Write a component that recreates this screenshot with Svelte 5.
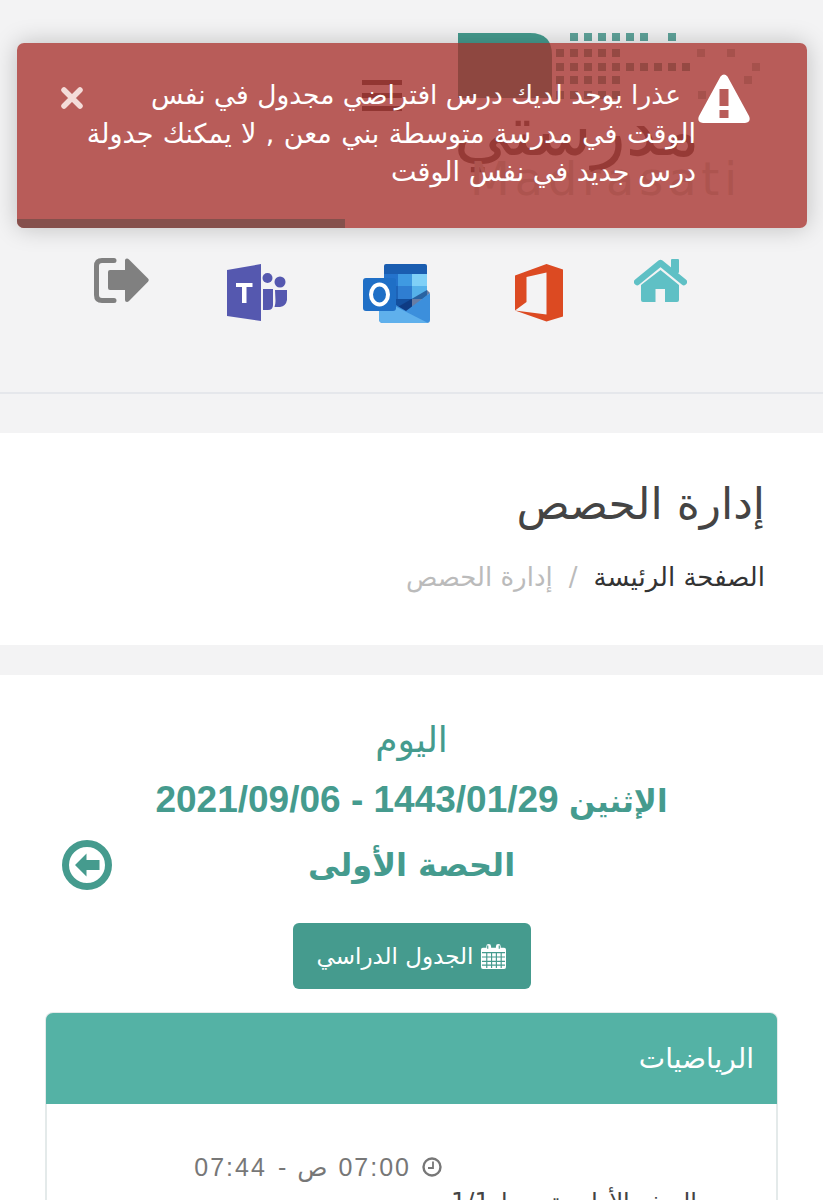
<script lang="ts">
  // brand dots next to the logo mark: [x, y] on a 14px-ish grid
  const dots: number[][] = [];
  const rows: [number, number[]][] = [
    [33, [570, 584, 598, 612, 626, 640, 668]],
    [49, [556, 570, 584, 598, 612, 697, 727]],
    [63, [556, 570, 584, 598, 612, 626, 640, 654, 668, 682, 752]],
    [76, [556, 570, 584, 598, 612, 744]],
    [91, [556, 570, 584, 598, 612, 698]]
  ];
  for (const [y, xs] of rows) for (const x of xs) dots.push([x - 458, y - 30]);
</script>

<div class="page" dir="rtl">
  <header class="topbar">
    <div class="brand-row">
      <svg class="logo" viewBox="0 0 330 175" width="330" height="175" aria-label="Madrasati">
        <path class="mark" d="M0 3H72Q94 3 94 25V68H0Z" />
        {#each dots as d}
          <rect class="dot" class:far={d[0] > 230} x={d[0]} y={d[1]} width="8" height="8" />
        {/each}
        <text class="logo-ar" x="242" y="125" text-anchor="end">مدرستي</text>
        <text class="logo-en" x="12" y="165">Madrasati</text>
      </svg>
      <div class="burger"><span></span><span></span><span></span></div>
    </div>

    <nav class="shortcuts">
      <a class="home" href="#home" aria-label="home">
        <svg viewBox="0 0 53 45" width="53" height="45">
          <rect x="37" y="1" width="8" height="14" rx="1" />
          <path class="roof" d="M3.200 24L26.500 5L49.800 24" />
          <path d="M26.500 12L45 27V42Q45 44 43 44H31V31H21.500V44H9Q7 44 7 42V27Z" />
        </svg>
      </a>
      <a class="office" href="#office" aria-label="office">
        <svg viewBox="0 0 48 58" width="48" height="58">
          <path d="M0 11.500L31.500 0L48 5.500V52.500L31.500 57.500L0 46.500L31.500 50.500V8.500L11.500 13V38L0 46.500Z" />
        </svg>
      </a>
      <a class="outlook" href="#outlook" aria-label="outlook">
        <svg viewBox="0 0 68 60" width="68" height="60">
          <path fill="#1a5db0" d="M21 2Q21 0 23 0H62Q64 0 64 2V10H21Z" />
          <rect fill="#2473cc" x="21" y="10" width="14" height="12" />
          <rect fill="#3f9ae2" x="35" y="10" width="14" height="12" />
          <rect fill="#7fd0f7" x="49" y="10" width="15" height="12" />
          <rect fill="#1d63b8" x="21" y="22" width="14" height="13" />
          <rect fill="#2f7ed2" x="35" y="22" width="14" height="13" />
          <rect fill="#56b2ea" x="49" y="22" width="15" height="13" />
          <rect fill="#134f9e" x="21" y="35" width="28" height="12" />
          <path fill="#0c2f72" d="M33 44L64 26L67 29L44 48Z" opacity=".6" />
          <path fill="#3c8fdc" d="M16 31L43 47L67 29V56Q67 59 64 59H20Q16 59 16 55Z" />
          <path fill="#5fb0ec" d="M16 34L65 59H20Q16 59 16 55Z" />
          <rect fill="#1f6fc6" x="0" y="14" width="33" height="33" rx="3" />
          <ellipse cx="16.500" cy="30.500" rx="8.500" ry="10" fill="none" stroke="#fff" stroke-width="4" />
        </svg>
      </a>
      <a class="teams" href="#teams" aria-label="teams">
        <svg viewBox="0 0 61 58" width="61" height="58">
          <path fill="#5558af" d="M0 6L34 0V57L0 52Z" />
          <path fill="#fff" d="M9 19H25.500V23H19.500V39H15V23H9Z" />
          <circle fill="#5558af" cx="40.500" cy="14" r="5" />
          <circle fill="#5558af" cx="53" cy="18" r="5.500" />
          <path fill="#5558af" d="M36 25H46V41Q46 46 41 46H36Z" />
          <path fill="#5558af" d="M48 26H60V36Q59 42 53 43H47.500Q48.500 40 48.500 37Z" />
        </svg>
      </a>
      <a class="logout" href="#logout" aria-label="logout">
        <svg viewBox="0 0 55 45" width="55" height="45">
          <path fill="none" stroke="#808080" stroke-width="5" stroke-linecap="round" d="M20 2.500H8Q2.500 2.500 2.500 8V37Q2.500 42.500 8 42.500H20" />
          <path fill="#808080" d="M14 14Q14 12 16 12H31V2.500Q31 .5 33 .6Q34 .6 35 1.600L54 20.500Q55.500 22 54 23.700L35 43Q34 44 33 44Q31 44 31 42V32H16Q14 32 14 30Z" />
        </svg>
      </a>
    </nav>
  </header>

  <section class="heading">
    <h1>إدارة الحصص</h1>
    <div class="crumbs">
      <a href="#root">الصفحة الرئيسة</a>
      <span class="sep">/</span>
      <span class="current">إدارة الحصص</span>
    </div>
  </section>

  <main class="content">
    <div class="today">اليوم</div>
    <div class="date"><span class="day">الإثنين</span> 1443/01/29 - 2021/09/06</div>
    <div class="period-row">
      <a class="back" href="#back" aria-label="back">
        <svg viewBox="0 0 50 50" width="50" height="50">
          <circle cx="25" cy="25" r="21.500" fill="none" stroke="#459b8e" stroke-width="7" />
          <path fill="#459b8e" d="M13 25L24.500 13.500V20H37.500V30H24.500V36.500Z" />
        </svg>
      </a>
      <span class="period">الحصة الأولى</span>
    </div>
    <div class="actions">
      <button class="schedule" type="button">
        <svg viewBox="0 0 26 26" width="25" height="25">
          <path fill="#fff" d="M2 4H5.500V2.500A2.500 2.500 0 0 1 10.500 2.500V4H15.500V2.500A2.500 2.500 0 0 1 20.500 2.500V4H24Q26 4 26 6V24Q26 26 24 26H2Q0 26 0 24V6Q0 4 2 4Z" />
          <path stroke="#459b8e" stroke-width="1.200" d="M1 9H25M1 13.500H25M1 18H25M1 22H25M6 9V25M11 9V25M16 9V25M21 9V25M7 1.500V5M19 1.500V5" />
        </svg>
        الجدول الدراسي
      </button>
    </div>

    <article class="card">
      <div class="card-head">الرياضيات</div>
      <div class="card-body">
        <div class="time">
          <svg viewBox="0 0 20 20" width="20" height="20">
            <circle cx="10" cy="10" r="8.500" fill="none" stroke="#777" stroke-width="2.400" />
            <path fill="none" stroke="#777" stroke-width="1.800" d="M11 4.500V11H6" />
          </svg>
          <span class="clock">07:00</span>
          <span>ص</span>
          <span>-</span>
          <span class="clock">07:44</span>
        </div>
        <div class="klass">الصف الأول متوسط 1/1</div>
      </div>
    </article>
  </main>

  <div class="toast" role="alert">
    <svg class="warn" viewBox="0 0 52 50" width="52" height="50">
      <path fill="#fff" fill-rule="evenodd" d="M22.500 2.500Q26 -1.500 29.500 2.500L51 42Q53.500 48 47 49H5Q-1.500 48 1 42ZM21.500 15V32H30.500V15ZM21.500 36V44H30.500V36Z" />
    </svg>
    <p class="message">
      <button class="close" type="button" aria-label="close">
        <svg viewBox="0 0 24 24" width="24" height="24">
          <path fill="none" stroke="#f4dcd9" stroke-width="5.500" stroke-linecap="round" d="M4 4L20 20M20 4L4 20" />
        </svg>
      </button>
      <span class="first">عذرا يوجد لديك درس افتراضي مجدول في نفس</span><br />
      <span class="second">الوقت في مدرسة متوسطة بني معن , لا يمكنك جدولة</span><br />
      درس جديد في نفس الوقت
    </p>
    <div class="progress"></div>
  </div>
</div>

<style>
  :global(body) {
    margin: 0;
    background: #fff;
  }
  .page {
    position: relative;
    height: 1200px;
    overflow: hidden;
    background: #f3f3f4;
    font-family: "DejaVu Sans", sans-serif;
    color: #444;
  }
  .topbar {
    height: 394px;
    box-sizing: border-box;
    border-bottom: 2px solid #e5e7eb;
  }
  .brand-row {
    display: flex;
    flex-direction: row-reverse;
    align-items: flex-start;
    gap: 56px;
    height: 225px;
    box-sizing: border-box;
    padding: 30px 35px 0 0;
    direction: ltr;
  }
  .logo {
    display: block;
    flex-shrink: 0;
  }
  .mark {
    fill: #459b8e;
  }
  .dot {
    fill: #5fa49b;
  }
  .dot.far {
    fill: #a9c4bf;
  }
  .logo-ar {
    font-size: 70px;
    fill: #666;
  }
  .logo-en {
    font-size: 46px;
    letter-spacing: 5px;
    fill: #c4cfcd;
  }
  .burger {
    display: flex;
    flex-direction: column;
    gap: 8px;
    margin-top: 50px;
    width: 40px;
  }
  .burger span {
    height: 5px;
    background: #555;
  }
  .shortcuts {
    display: flex;
    align-items: flex-start;
    padding-top: 33px;
    padding-right: 136px;
  }
  .shortcuts a {
    display: block;
    line-height: 0;
  }
  .office,
  .outlook,
  .teams {
    margin-top: 6px;
  }
  .office {
    margin-right: 71px;
    fill: #dc4a22;
  }
  .home {
    fill: #5fc0c5;
  }
  .roof {
    fill: none;
    stroke: #5fc0c5;
    stroke-width: 6.500px;
    stroke-linecap: round;
    stroke-linejoin: round;
  }
  .outlook {
    margin-right: 84px;
  }
  .teams {
    margin-right: 75px;
  }
  .logout {
    margin-right: 78px;
  }
  .heading {
    margin-top: 39px;
    height: 212px;
    background: #fff;
    padding: 46px 58px 0;
    box-sizing: border-box;
  }
  h1 {
    margin: 0;
    font-size: 44px;
    font-weight: 400;
    line-height: 50px;
    color: #444;
  }
  .crumbs {
    display: flex;
    gap: 16px;
    margin-top: 28px;
    font-size: 26px;
    line-height: 40px;
  }
  .crumbs a {
    color: #333;
    text-decoration: none;
  }
  .sep,
  .current {
    color: #bbb;
  }
  .content {
    margin-top: 30px;
    height: 525px;
    background: #fff;
    padding-top: 40px;
    box-sizing: border-box;
    text-align: center;
    color: #459b8e;
  }
  .today {
    font-size: 36px;
    line-height: 50px;
  }
  .date {
    margin-top: 8px;
    font-family: "Liberation Sans", "DejaVu Sans", sans-serif;
    font-size: 37px;
    font-weight: 700;
    line-height: 54px;
  }
  .day {
    font-size: 31px;
  }
  .period-row {
    position: relative;
    margin-top: 8px;
    height: 56px;
  }
  .period {
    font-size: 32px;
    font-weight: 700;
    line-height: 56px;
  }
  .back {
    position: absolute;
    left: 62px;
    top: 3px;
    line-height: 0;
  }
  .actions {
    display: flex;
    justify-content: center;
    margin-top: 30px;
  }
  .schedule {
    display: flex;
    align-items: center;
    gap: 8px;
    width: 238px;
    height: 66px;
    justify-content: center;
    padding: 0;
    border: 0;
    border-radius: 6px;
    background: #459b8e;
    color: #fff;
    font-family: inherit;
    font-size: 23px;
  }
  .card {
    margin: 23px 45px 0;
    border: 2px solid #e4eaea;
    border-radius: 8px;
    border-bottom: 0;
    text-align: right;
    color: #777;
    background: #fff;
  }
  .card-head {
    height: 91px;
    box-sizing: border-box;
    margin: -1px -1px 0;
    padding: 0 23px;
    border-radius: 7px 7px 0 0;
    background: #54b2a5;
    color: #fff;
    font-size: 28px;
    line-height: 92px;
  }
  .card-body {
    padding: 48px 0 0;
  }
  .time {
    display: flex;
    align-items: center;
    gap: 11px;
    padding-right: 334px;
    font-family: "Liberation Sans", "DejaVu Sans", sans-serif;
    font-size: 25px;
    line-height: 30px;
  }
  .clock {
    direction: ltr;
    letter-spacing: 2px;
  }
  .klass {
    margin-top: 6px;
    padding-right: 79px;
    font-size: 24px;
    color: #444;
  }
  .toast {
    position: absolute;
    top: 43px;
    left: 17px;
    width: 790px;
    height: 185px;
    overflow: hidden;
    border-radius: 7px;
    background: rgba(166, 45, 40, 0.76);
    box-shadow: 0 0 24px rgba(0, 0, 0, 0.22);
    color: #fff;
  }
  .warn {
    position: absolute;
    top: 31px;
    right: 57px;
  }
  .message {
    position: absolute;
    top: 33px;
    right: 111px;
    left: 43px;
    margin: 0;
    font-size: 27px;
    line-height: 38.500px;
  }
  .first {
    margin-right: -15px;
    padding-right: 30px;
    font-size: 26.500px;
  }
  .second {
    word-spacing: 0.800px;
  }
  .close {
    float: left;
    margin: 10px 0 0;
    padding: 0;
    border: 0;
    background: none;
    line-height: 0;
  }
  .progress {
    position: absolute;
    bottom: 0;
    left: 0;
    width: 328px;
    height: 9px;
    background: #85504c;
  }
</style>
